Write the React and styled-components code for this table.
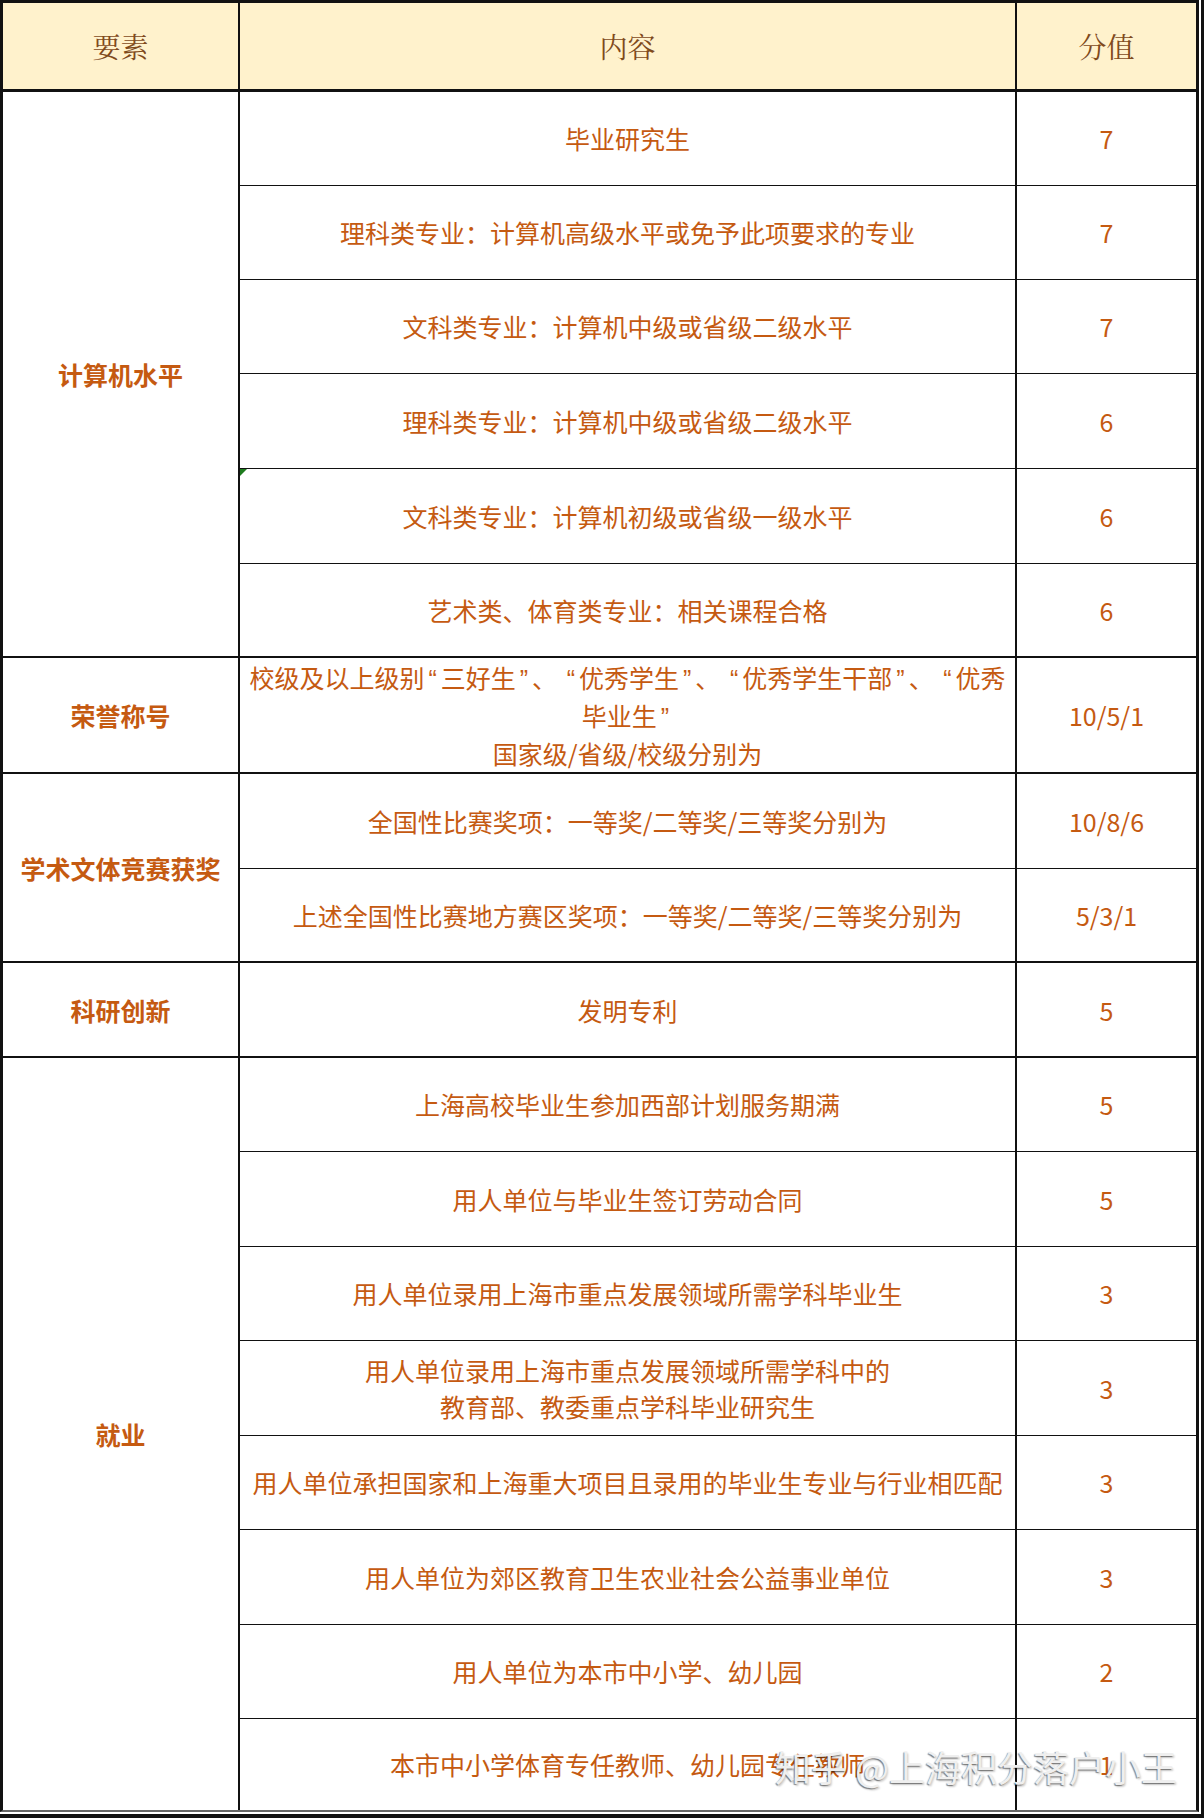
import styled, { createGlobalStyle } from "styled-components";

const GlobalStyle = createGlobalStyle`
  body {
    margin: 0;
    background: #ffffff;
  }
`;

const ORANGE = "#c55a11";

// the sheet uses narrow latin quotes with a little air round them
const Q = styled.span`
  font-family: "Liberation Sans", Arial, sans-serif;
  padding: 0 4px;
`;

const honorLine = (
  <>
    校级及以上级别<Q>“</Q>三好生<Q>”</Q>、 <Q>“</Q>优秀学生<Q>”</Q>、 <Q>“</Q>优秀学生干部<Q>”</Q>、 <Q>“</Q>优秀
  </>
);

const groups = [
  {
    label: "计算机水平",
    rows: [
      { text: ["毕业研究生"], score: "7", h: 95 },
      { text: ["理科类专业：计算机高级水平或免予此项要求的专业"], score: "7", h: 94 },
      { text: ["文科类专业：计算机中级或省级二级水平"], score: "7", h: 94 },
      { text: ["理科类专业：计算机中级或省级二级水平"], score: "6", h: 95 },
      { text: ["文科类专业：计算机初级或省级一级水平"], score: "6", h: 95, flag: true },
      { text: ["艺术类、体育类专业：相关课程合格"], score: "6", h: 94 },
    ],
  },
  {
    label: "荣誉称号",
    rows: [
      {
        text: [
          honorLine,
          <>
            毕业生<Q>”</Q>
          </>,
          "国家级/省级/校级分别为",
        ],
        score: "10/5/1",
        h: 116,
      },
    ],
  },
  {
    label: "学术文体竞赛获奖",
    rows: [
      { text: ["全国性比赛奖项：一等奖/二等奖/三等奖分别为"], score: "10/8/6", h: 95 },
      { text: ["上述全国性比赛地方赛区奖项：一等奖/二等奖/三等奖分别为"], score: "5/3/1", h: 94 },
    ],
  },
  {
    label: "科研创新",
    rows: [{ text: ["发明专利"], score: "5", h: 95 }],
  },
  {
    label: "就业",
    rows: [
      { text: ["上海高校毕业生参加西部计划服务期满"], score: "5", h: 94 },
      { text: ["用人单位与毕业生签订劳动合同"], score: "5", h: 95 },
      { text: ["用人单位录用上海市重点发展领域所需学科毕业生"], score: "3", h: 94 },
      {
        text: ["用人单位录用上海市重点发展领域所需学科中的", "教育部、教委重点学科毕业研究生"],
        score: "3",
        h: 95,
      },
      { text: ["用人单位承担国家和上海重大项目且录用的毕业生专业与行业相匹配"], score: "3", h: 94 },
      { text: ["用人单位为郊区教育卫生农业社会公益事业单位"], score: "3", h: 95 },
      { text: ["用人单位为本市中小学、幼儿园"], score: "2", h: 94 },
      { text: ["本市中小学体育专任教师、幼儿园专任教师"], score: "1", h: 92 },
    ],
  },
];

const App = () => {
  return (
    <>
      <GlobalStyle />
      <Page>
        <Frame>
          <Sheet>
            <colgroup>
              <col style={{ width: 236 }} />
              <col style={{ width: 777 }} />
              <col style={{ width: 180 }} />
            </colgroup>
            <thead>
              <HeadRow>
                <HeadCell>要素</HeadCell>
                <HeadCell>内容</HeadCell>
                <HeadCell>分值</HeadCell>
              </HeadRow>
            </thead>
            <tbody>
              {groups.map((group) =>
                group.rows.map((row, i) => (
                  <Row key={group.label + i} $h={row.h}>
                    {i === 0 && (
                      <LabelCell rowSpan={group.rows.length} $first>
                        {group.label}
                      </LabelCell>
                    )}
                    <ContentCell $first={i === 0}>
                      {row.flag && <ErrorFlag />}
                      {row.text.map((line, j) => (
                        <Line key={j}>{line}</Line>
                      ))}
                    </ContentCell>
                    <ScoreCell $first={i === 0}>{row.score}</ScoreCell>
                  </Row>
                ))
              )}
            </tbody>
          </Sheet>
        </Frame>
        <Watermark>知乎 @上海积分落户小王</Watermark>
      </Page>
    </>
  );
};

const Page = styled.div`
  position: relative;
  width: 1204px;
  height: 1818px;
  box-sizing: border-box;
  padding: 0 2px 2px 0;
  border-right: 3px solid #111;
  border-bottom: 4px solid #111;
  background: #fff;
`;
const Frame = styled.div`
  width: 1199px;
  box-sizing: border-box;
  border-left: 3px solid #111;
  border-top: 3px solid #111;
  border-right: 3px solid #111;
  border-bottom: 2px solid #666;
`;
const Sheet = styled.table`
  width: 1193px;
  height: 1807px;
  table-layout: fixed;
  border-collapse: collapse;
  border-style: hidden;
  font-family: "Noto Sans CJK SC", "Noto Sans", sans-serif;
`;
const HeadRow = styled.tr`
  height: 87px;
  background: #fff2cc;
`;
const HeadCell = styled.th`
  padding: 0;
  border: 2px solid #111;
  border-bottom-width: 3px;
  font-family: "Noto Serif CJK SC", "Noto Sans CJK SC", serif;
  font-weight: 400;
  font-size: 28px;
  color: #7f4a1c;
  text-align: center;
  vertical-align: middle;
`;
const Row = styled.tr`
  height: ${(p) => p.$h}px;
`;
const Cell = styled.td`
  position: relative;
  padding: 0 4px;
  border: 1px solid #111;
  border-left-width: 2px;
  border-right-width: 2px;
  border-top-width: ${(p) => (p.$first ? 2 : 1)}px;
  text-align: center;
  vertical-align: middle;
  color: ${ORANGE};
  font-size: 25px;
  line-height: 36px;
  white-space: nowrap;
`;
const LabelCell = styled(Cell)`
  font-weight: 700;
  border-bottom-width: 2px;
`;
const ContentCell = styled(Cell)``;
const ScoreCell = styled(Cell)``;
const Line = styled.div`
  white-space: nowrap;
`;
const ErrorFlag = styled.span`
  position: absolute;
  top: 0;
  left: 0;
  width: 0;
  height: 0;
  border-top: 7px solid #1e7b1e;
  border-right: 7px solid transparent;
`;
const Watermark = styled.div`
  position: absolute;
  left: 775px;
  top: 1743px;
  font-family: "Noto Sans CJK SC", "Noto Sans", sans-serif;
  font-size: 36px;
  line-height: 46px;
  color: #efefef;
  white-space: nowrap;
  text-shadow: -1px 1px 1px rgba(0, 0, 0, 0.45), 1px 2px 2px rgba(0, 0, 0, 0.2);
  pointer-events: none;
`;

export default App;
